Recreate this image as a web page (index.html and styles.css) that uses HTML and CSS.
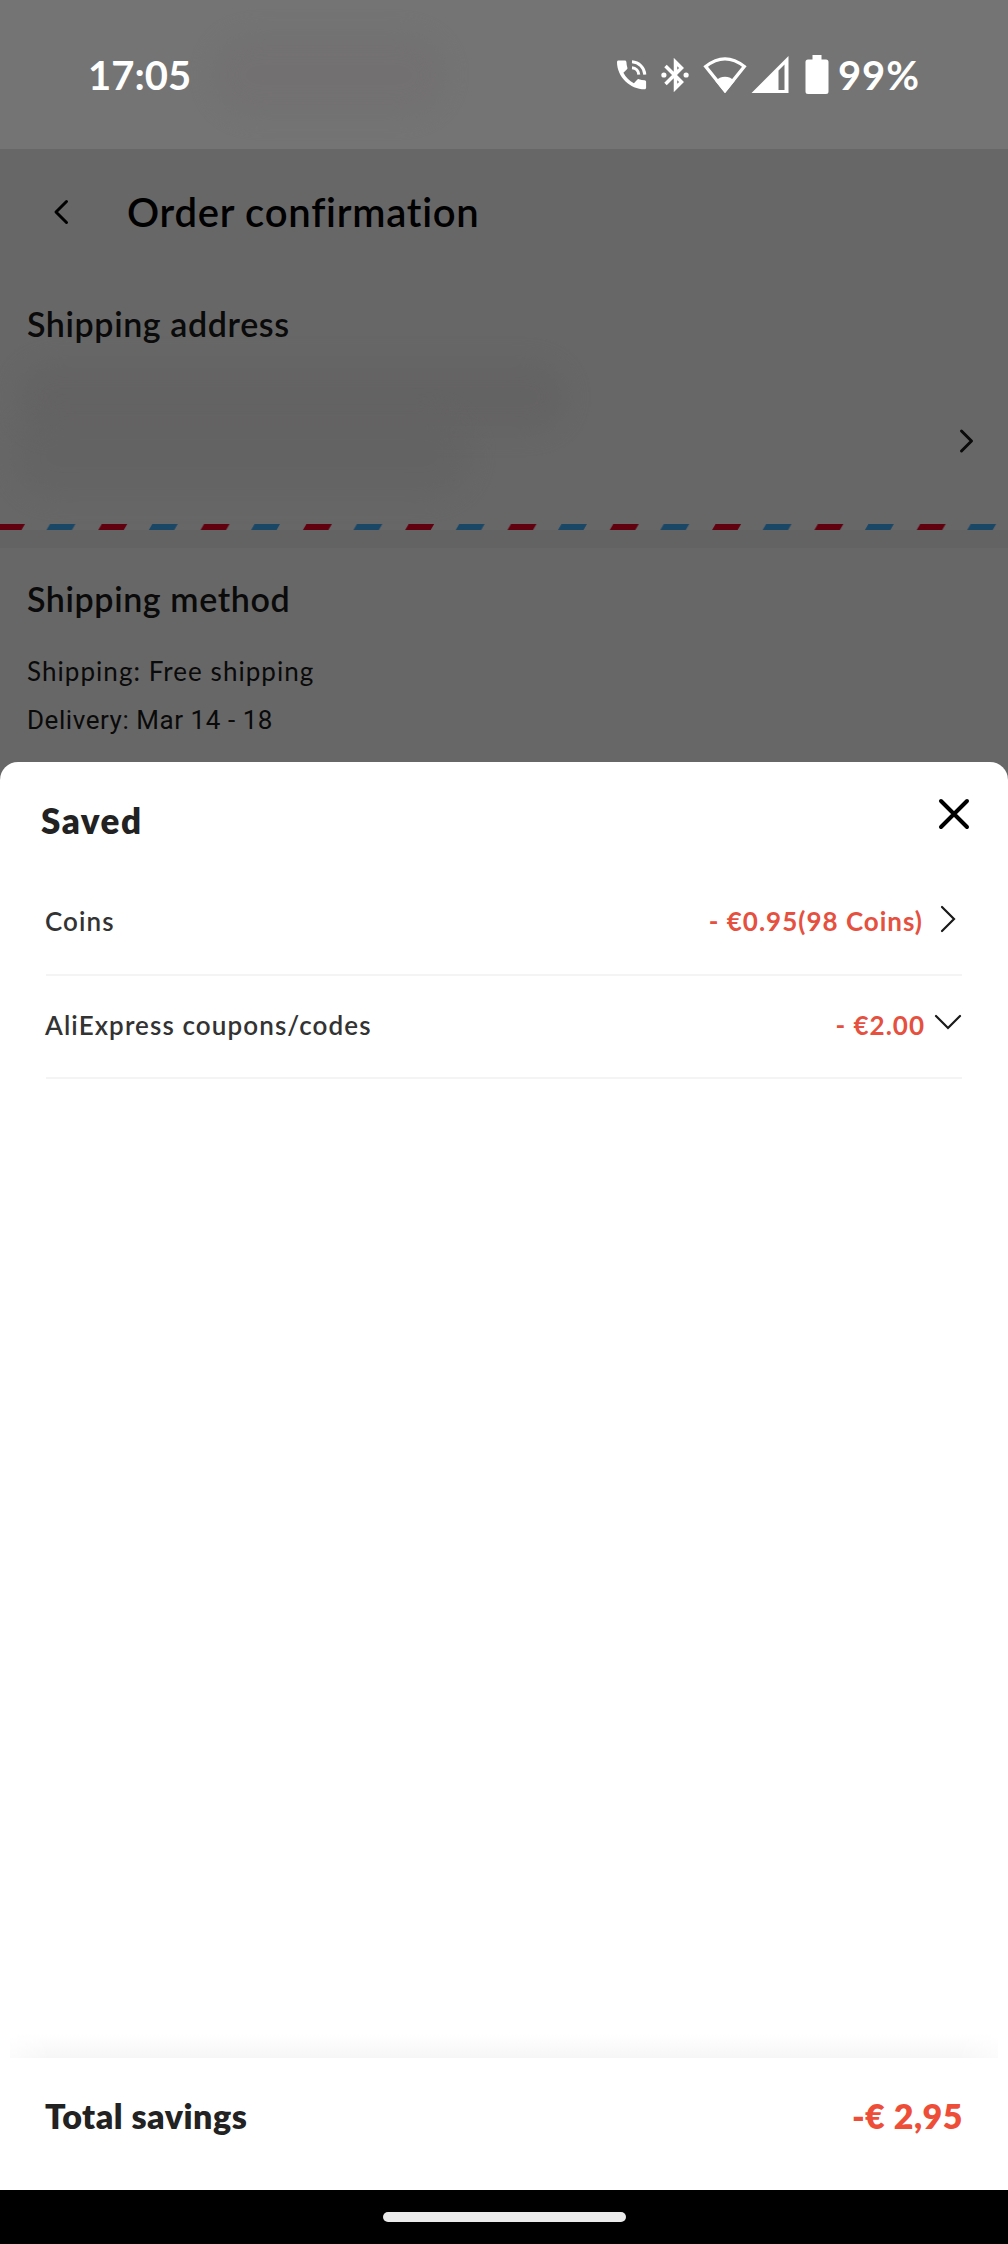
FILE: index.html
```html
<!DOCTYPE html>
<html lang="en">
<head>
<meta charset="utf-8">
<title>Order confirmation</title>
<link rel="stylesheet" href="styles.css">
</head>
<body>
<div class="screen">
  <main class="page">
    <div class="status-bar">
      <span class="clock">17:05</span>
      <span class="smudge smudge-status"></span>
      <div class="status-icons">
        <svg class="icon-call" width="32" height="32" viewBox="0 0 32 32" fill="#fff">
          <path d="M2.500 1.500h6.300c.9 0 1.500.6 1.600 1.500.1 2 .4 3.900 1 5.700.2.600.1 1.200-.4 1.600l-3.600 3.500c2.400 4.600 5.900 8 10.500 10.400l3.500-3.600c.4-.4 1-.6 1.600-.4 1.800.6 3.700.9 5.600 1 .9.100 1.500.7 1.500 1.600v6c0 .9-.6 1.500-1.500 1.500C14 30.300 1 18 1 3c0-.9.600-1.500 1.500-1.500z"/>
          <path d="M16 2.800A13.500 13.500 0 0 1 28.800 15.600M16 8.800A7.300 7.300 0 0 1 22.800 15.600" fill="none" stroke="#fff" stroke-width="3"/>
        </svg>
        <svg class="icon-bt" width="28" height="34" viewBox="0 0 28 34">
          <path d="M4.500 8 20.500 24 14.500 30V4L20.500 10 4.500 26" fill="none" stroke="#fff" stroke-width="3.500"/>
          <circle cx="2.900" cy="17" r="2.600" fill="#fff"/><circle cx="25.100" cy="17" r="2.600" fill="#fff"/>
        </svg>
        <svg class="icon-wifi" width="44" height="38" viewBox="0 0 44 38">
          <path d="M2.700 10.500Q22-4.800 41.300 10.500L22 34.500Z" fill="none" stroke="#fff" stroke-width="3.300"/>
          <path d="M22 37 12.500 25.200C17.500 19.300 26.500 19.300 31.500 25.200Z" fill="#fff"/>
        </svg>
        <svg class="icon-signal" width="38" height="38" viewBox="0 0 38 38">
          <path d="M.500 37H37.500V0ZM27.500 34V14.500L33.500 8.500V34Z" fill="#fff" fill-rule="evenodd"/>
        </svg>
        <svg class="icon-battery" width="24" height="40" viewBox="0 0 24 40">
          <path d="M7.500 0h9v4.500H21a2.500 2.500 0 0 1 2.500 2.500v29.500A2.500 2.500 0 0 1 21 39H3A2.500 2.500 0 0 1 .500 36.500V7A2.500 2.500 0 0 1 3 4.500h4.500Z" fill="#fff"/>
        </svg>
        <span class="battery-level">99%</span>
      </div>
    </div>
    <header class="title-bar">
      <svg width="16" height="26" viewBox="0 0 16 26"><path d="M13.500 2.500 3 13 13.500 23.500" fill="none" stroke="#000" stroke-width="3" stroke-linecap="round" stroke-linejoin="round"/></svg>
      <h1>Order confirmation</h1>
    </header>
    <section class="address">
      <h2>Shipping address</h2>
      <div class="address-body">
        <span class="smudge smudge-top"></span>
        <span class="smudge smudge-bottom"></span>
        <svg width="16" height="26" viewBox="0 0 16 26"><path d="M2.500 3 12.500 13 2.500 23" fill="none" stroke="#0a0a0a" stroke-width="3" stroke-linecap="round" stroke-linejoin="round"/></svg>
      </div>
    </section>
    <svg class="airmail" width="1008" height="6" viewBox="0 0 1008 6">
      <defs>
        <pattern id="airmail" width="102.300" height="6" patternUnits="userSpaceOnUse" x="-4">
          <path d="M0 6 3.500 0H29L25.500 6Z" fill="#61000f"/>
          <path d="M50.500 6 54 0H79.500L76 6Z" fill="#1b4766"/>
        </pattern>
      </defs>
      <rect width="1008" height="6" fill="url(#airmail)"/>
    </svg>
    <div class="gap-band"></div>
    <section class="method">
      <h2>Shipping method</h2>
      <p class="shipping-line">Shipping: Free shipping</p>
      <p class="delivery-line">Delivery: Mar 14 - 18</p>
    </section>
  </main>
  <section class="sheet">
    <header class="sheet-head">
      <h2>Saved</h2>
      <svg width="32" height="32" viewBox="0 0 32 32"><path d="M3 3 29 29M29 3 3 29" stroke="#000" stroke-width="4" stroke-linecap="round"/></svg>
    </header>
    <div class="row">
      <span class="label">Coins</span>
      <span class="amount coins">- €0.95(98 Coins)</span>
      <svg class="chev-right" width="16" height="28" viewBox="0 0 16 28"><path d="M2 2 14 14 2 26" fill="none" stroke="#1a1a1a" stroke-width="2.200" stroke-linecap="round"/></svg>
    </div>
    <div class="row row-coupons">
      <span class="label">AliExpress coupons/codes</span>
      <span class="amount">- €2.00</span>
      <svg class="chev-down" width="28" height="16" viewBox="0 0 28 16"><path d="M2 2 14 14 26 2" fill="none" stroke="#1a1a1a" stroke-width="2.200" stroke-linecap="round"/></svg>
    </div>
    <div class="spacer"></div>
    <div class="footer-shadow"></div>
    <footer class="total">
      <span class="total-label">Total savings</span>
      <span class="total-value">-€ 2,95</span>
    </footer>
  </section>
  <div class="nav-bar"><span class="pill"></span></div>
</div>
</body>
</html>
```
FILE: styles.css
```css
* { box-sizing: border-box; margin: 0; padding: 0; }
body { background: #676767; font-family: Lato, "Open Sans", sans-serif; font-kerning: normal; }
svg { display: block; flex: none; }
.screen { width: 1008px; height: 2244px; display: flex; flex-direction: column; overflow: hidden; }

.page { height: 762px; flex: none; background: #676767; color: #0a0a0a; white-space: nowrap; }
.status-bar { position: relative; height: 149px; padding: 0 88px 0 88px; display: flex; align-items: center; justify-content: space-between; background: #747474; color: #fff; }
.clock, .battery-level { font-size: 40px; font-weight: 700; line-height: 48px; }
.battery-level { width: 82px; letter-spacing: .9px; margin-left: 9px; }
.status-icons { display: flex; align-items: center; }
.icon-bt { margin-left: 13px; }
.icon-wifi { margin-left: 14px; }
.icon-signal { margin-left: 4px; }
.icon-battery { margin-left: 16px; }
.smudge { position: absolute; border-radius: 50px; filter: blur(13px); }
.smudge-status { left: 212px; top: 34px; width: 234px; height: 82px; background: #726f6f; opacity: .6; }

.title-bar { height: 125px; padding-left: 53px; display: flex; align-items: center; gap: 58px; color: #000; }
h1 { font-size: 40px; line-height: 48px; font-weight: 600; letter-spacing: .75px; }
h2 { font-size: 34px; line-height: 40px; font-weight: 600; letter-spacing: .6px; }
.address { height: 250px; padding: 30px 33px 0 27px; }
.address-body { position: relative; height: 180px; padding-top: 84px; display: flex; justify-content: flex-end; align-items: flex-start; }
.smudge-top { left: -10px; top: 18px; width: 550px; height: 70px; background: #636161; opacity: .6; }
.smudge-bottom { left: -15px; top: 70px; width: 460px; height: 84px; background: #636262; opacity: .6; }
.gap-band { height: 18px; background: #636363; }
.method { padding: 31px 27px 0; }
.method p { font-size: 26px; line-height: 48px; }
.method .shipping-line { margin-top: 28px; letter-spacing: 1.05px; }
.method .delivery-line { margin-top: 1px; font-family: Roboto, sans-serif; letter-spacing: .55px; }

.sheet { flex: none; height: 1428px; display: flex; flex-direction: column; background: #fff; border-radius: 18px 18px 0 0; color: #222; }
.sheet-head { height: 106px; padding: 0 38px 2px 41px; display: flex; align-items: center; justify-content: space-between; }
.sheet-head h2 { padding-top: 11px; font-size: 35px; font-weight: 800; letter-spacing: 1.500px; }
.row { height: 108px; margin: 0 46px; display: flex; align-items: center; border-bottom: 2px solid #f4f4f4; font-size: 26px; line-height: 32px; font-weight: 600; }
.row-coupons { height: 103px; padding-bottom: 3px; }
.label { flex: 1; margin-left: -1px; color: #333; letter-spacing: 1.100px; }
.amount { color: #e5503f; font-weight: 700; letter-spacing: 1px; }
.chev-right { margin: 0 6px 5px 17px; }
.chev-down { margin: 0 0 6px 9px; }
.spacer { flex: 1; }
.footer-shadow { height: 24px; margin: 0 10px; background: linear-gradient(#fff, #f6f6f6); -webkit-mask-image: linear-gradient(90deg, #0006, #000 40px, #000 calc(100% - 40px), #0006); mask-image: linear-gradient(90deg, #0006, #000 40px, #000 calc(100% - 40px), #0006); }
.total { height: 132px; padding: 0 45px 16px; display: flex; align-items: center; justify-content: space-between; font-size: 34px; font-weight: 800; line-height: 40px; }
.total-label { letter-spacing: .5px; }
.total-value { color: #ee4e38; letter-spacing: .5px; }

.nav-bar { height: 54px; flex: none; display: flex; justify-content: center; padding-top: 22px; background: #000; }
.pill { width: 243px; height: 10px; border-radius: 5px; background: #ebebeb; }
```
